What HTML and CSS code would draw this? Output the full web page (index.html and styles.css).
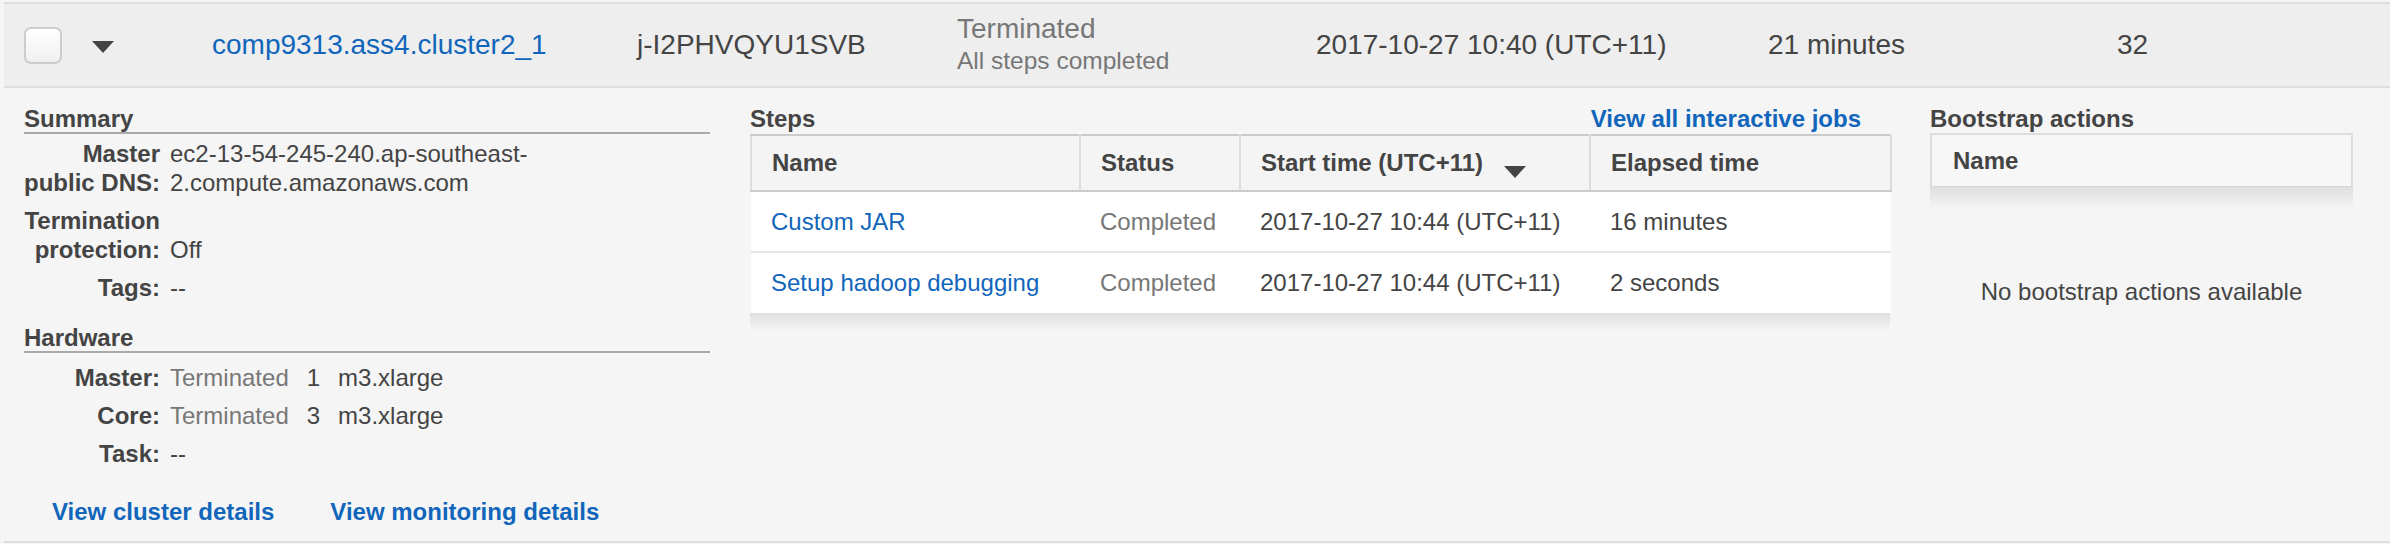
FILE: index.html
```html
<!DOCTYPE html>
<html>
<head>
<meta charset="utf-8">
<link rel="stylesheet" href="styles.css">
</head>
<body>
<div class="cluster">
  <div class="row-main">
    <div class="cell"><span class="checkbox"></span></div>
    <div class="cell caret-cell">
      <svg class="caret" width="22" height="12" viewBox="0 0 22 12"><polygon points="0,0 22,0 11,12" fill="#444"/></svg>
    </div>
    <div class="cell"><a class="link name-link">comp9313.ass4.cluster2_1</a></div>
    <div class="cell">j-I2PHVQYU1SVB</div>
    <div class="cell status">
      <div class="status-main">Terminated</div>
      <div class="status-sub">All steps completed</div>
    </div>
    <div class="cell">2017-10-27 10:40 (UTC+11)</div>
    <div class="cell">21 minutes</div>
    <div class="cell">32</div>
  </div>

  <div class="details">
    <section class="summary">
      <h3 class="section-title">Summary</h3>
      <dl class="kv kv-summary">
        <dt>Master<br>public DNS:</dt>
        <dd>ec2-13-54-245-240.ap-southeast-<br>2.compute.amazonaws.com</dd>
        <dt>Termination<br>protection:</dt>
        <dd><br>Off</dd>
        <dt>Tags:</dt>
        <dd>--</dd>
      </dl>
      <h3 class="section-title hw-title">Hardware</h3>
      <dl class="kv kv-hw">
        <dt>Master:</dt>
        <dd class="hw"><span class="muted">Terminated</span><span>1</span><span>m3.xlarge</span></dd>
        <dt>Core:</dt>
        <dd class="hw"><span class="muted">Terminated</span><span>3</span><span>m3.xlarge</span></dd>
        <dt>Task:</dt>
        <dd>--</dd>
      </dl>
      <div class="summary-links">
        <a class="link bold">View cluster details</a>
        <a class="link bold">View monitoring details</a>
      </div>
    </section>

    <section class="steps">
      <div class="steps-head">
        <h3 class="plain-title">Steps</h3>
        <a class="link bold">View all interactive jobs</a>
      </div>
      <table class="grid-table">
        <colgroup>
          <col class="c-name"><col class="c-status"><col class="c-start"><col class="c-elapsed">
        </colgroup>
        <thead>
          <tr>
            <th>Name</th>
            <th>Status</th>
            <th>Start time (UTC+11)<svg class="sort" width="22" height="12" viewBox="0 0 22 12"><polygon points="0,0 22,0 11,12" fill="#444"/></svg></th>
            <th>Elapsed time</th>
          </tr>
        </thead>
        <tbody>
          <tr>
            <td><a class="link">Custom JAR</a></td>
            <td class="muted">Completed</td>
            <td>2017-10-27 10:44 (UTC+11)</td>
            <td>16 minutes</td>
          </tr>
          <tr>
            <td><a class="link">Setup hadoop debugging</a></td>
            <td class="muted">Completed</td>
            <td>2017-10-27 10:44 (UTC+11)</td>
            <td>2 seconds</td>
          </tr>
        </tbody>
      </table>
      <div class="under-shadow"></div>
    </section>

    <section class="bootstrap">
      <h3 class="plain-title">Bootstrap actions</h3>
      <div class="bs-header">Name</div>
      <div class="under-shadow bs-shadow"></div>
      <div class="bs-empty">No bootstrap actions available</div>
    </section>
  </div>
</div>
</body>
</html>
```

FILE: styles.css
```css
* { box-sizing: border-box; }

html, body {
  margin: 0;
  padding: 0;
}

body {
  background: #f5f5f5;
  font-family: "Liberation Sans", Arial, sans-serif;
  color: #444;
  width: 2390px;
  height: 544px;
  overflow: hidden;
}

.cluster {
  margin-left: 4px;
  padding-top: 2px;
}

.link {
  color: #1166bb;
  text-decoration: none;
}

.bold { font-weight: bold; }

.muted { color: #777; }

/* ---------- main row ---------- */
.row-main {
  display: grid;
  grid-template-columns: 68px 120px 425px 320px 359px 452px 349px 1fr;
  align-items: center;
  height: 86px;
  background: #eeeeee;
  border-top: 2px solid #dddddd;
  border-bottom: 2px solid #dddddd;
  padding-left: 20px;
  font-size: 28px;
  color: #444;
}

.cell {
  display: flex;
  align-items: center;
  white-space: nowrap;
}

.checkbox {
  display: block;
  width: 38px;
  height: 37px;
  border: 2px solid #cccccc;
  border-radius: 7px;
  background: linear-gradient(#ffffff, #f0f0f0);
}

.caret {
  display: block;
  margin-top: 4px;
}

.status {
  flex-direction: column;
  align-items: flex-start;
  color: #777;
}

.status-main {
  font-size: 28px;
  line-height: 31px;
}

.status-sub {
  font-size: 24.5px;
  line-height: 33px;
}

/* ---------- details ---------- */
.details {
  display: grid;
  grid-template-columns: 686px 1140px 423px;
  column-gap: 40px;
  align-items: start;
  padding: 17px 0 15px 20px;
  border-bottom: 2px solid #dddddd;
  font-size: 24px;
}

.section-title {
  margin: 0;
  font-size: 24px;
  line-height: 27px;
  font-weight: bold;
  color: #444;
  border-bottom: 2px solid #aaaaaa;
}

.plain-title {
  margin: 0;
  font-size: 24px;
  line-height: 27px;
  font-weight: bold;
  color: #444;
}

.hw-title { margin-top: 22px; }

.kv {
  display: grid;
  grid-template-columns: 136px 1fr;
  column-gap: 10px;
  row-gap: 9px;
  margin: 0;
  line-height: 29px;
}

.kv-summary { padding-top: 5px; }
.kv-hw { padding-top: 10px; }

.kv dt {
  font-weight: bold;
  text-align: right;
  white-space: nowrap;
}

.kv dd {
  margin: 0;
  white-space: nowrap;
}

.hw {
  display: flex;
  gap: 18px;
}

.summary-links {
  display: flex;
  gap: 56px;
  margin-top: 29px;
  padding-left: 28px;
  line-height: 29px;
}

/* ---------- steps ---------- */
.steps-head {
  display: flex;
  justify-content: space-between;
  align-items: baseline;
  line-height: 27px;
  padding-right: 29px;
  margin-bottom: 2px;
}

.grid-table {
  width: 1140px;
  table-layout: fixed;
  border-collapse: collapse;
  font-size: 24px;
}

.c-name { width: 329px; }
.c-status { width: 160px; }
.c-start { width: 350px; }
.c-elapsed { width: 301px; }

.grid-table th {
  height: 56px;
  padding: 0 0 0 20px;
  text-align: left;
  font-weight: bold;
  background: #f4f4f4;
  border-top: 2px solid #cccccc;
  border-bottom: 2px solid #cccccc;
  border-left: 2px solid #dddddd;
  border-right: 2px solid #dddddd;
  white-space: nowrap;
}

.sort {
  display: inline-block;
  margin-left: 21px;
  vertical-align: -7px;
}

.grid-table td {
  height: 61px;
  padding: 0 0 0 20px;
  background: #ffffff;
  white-space: nowrap;
}

.grid-table tbody tr:first-child td {
  border-bottom: 2px solid #e4e4e4;
}

.under-shadow {
  height: 18px;
  background: linear-gradient(rgba(0, 0, 0, 0.09), rgba(0, 0, 0, 0));
}

/* ---------- bootstrap ---------- */
.bs-header {
  margin-top: 1px;
  height: 54px;
  display: flex;
  align-items: center;
  padding-left: 21px;
  font-weight: bold;
  background: #f7f7f7;
  border: 2px solid #dddddd;
  border-bottom: 1px solid #d6d6d6;
}

.bs-shadow {
  height: 22px;
}

.bs-empty {
  margin-top: 68px;
  text-align: center;
  line-height: 29px;
}
```
